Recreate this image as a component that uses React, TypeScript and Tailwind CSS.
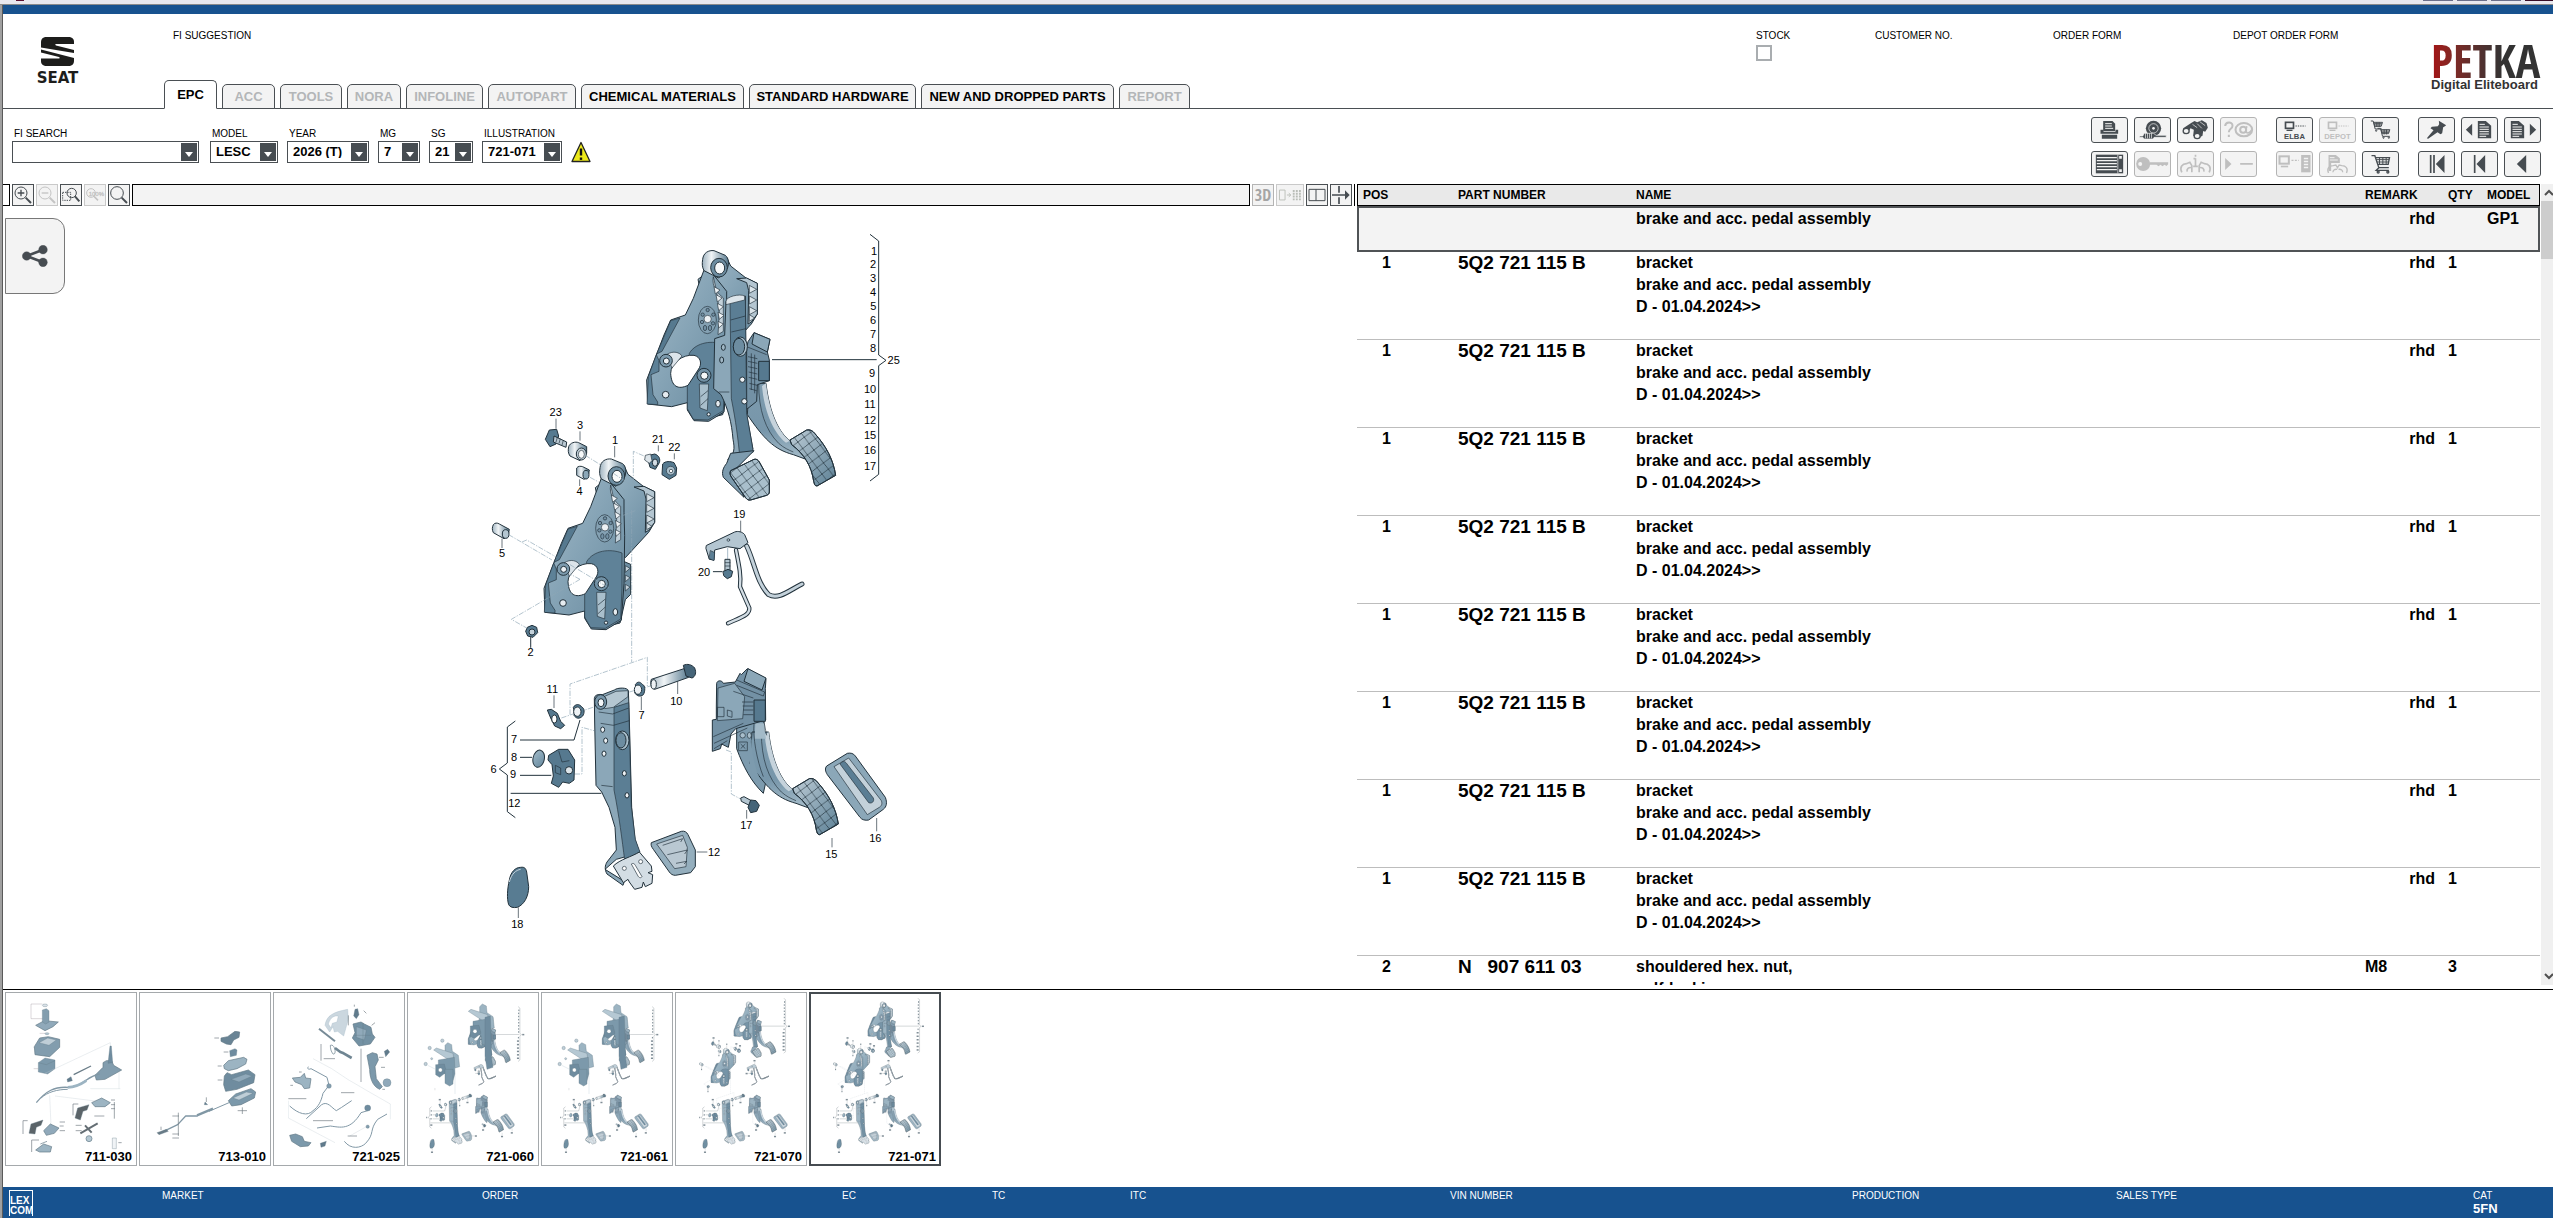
import type { ReactNode } from 'react'

const INK = '#22323c'

/* ---------- toolbar icons, drawn on a 110 x 78 grid ---------- */

const icons: Record<string, ReactNode> = {
  print: (
    <>
      <path d="M40 12h24l8 8v22H36V12z" />
      <path d="M42 20h20M42 27h20M42 34h24" stroke="#f3f3f3" strokeWidth="3" />
      <path d="M28 38h9v6h36v-6h8v12H28zM32 53h46v12H32z" />
    </>
  ),
  wheel: (
    <>
      <circle cx="58" cy="34" r="23" />
      <circle cx="58" cy="34" r="14" fill="none" stroke="#f3f3f3" strokeWidth="2" />
      <circle cx="58" cy="34" r="4" fill="#f3f3f3" />
      <path d="M16 57h10l4-8h28l8 6h30v6H60l-4 5H30l-4-5H16z" stroke="#f3f3f3" strokeWidth="2" />
      <path d="M34 49v15M40 49v15M46 49v15M52 49v15" stroke="#f3f3f3" strokeWidth="2" />
    </>
  ),
  binoculars: (
    <>
      <path d="M18 34l24-16 10-6 8 4 14-6 14 8 4 14-8 12-6-2-2 14-14 8-14-8 2-18-10-4-8 14-10 4z" />
      <ellipse cx="27" cy="42" rx="9" ry="8" fill="#f3f3f3" stroke="currentColor" strokeWidth="4" />
      <ellipse cx="60" cy="57" rx="9" ry="8" fill="#f3f3f3" stroke="currentColor" strokeWidth="4" />
      <path d="M60 20l14 14M68 14l16 12M46 22l14 10" stroke="#f3f3f3" strokeWidth="2" />
    </>
  ),
  help: (
    <g fill="none" stroke="currentColor" strokeWidth="6">
      <path d="M15 27c1-13 22-14 22-1 0 10-11 9-11 20M26 53v7" />
      <ellipse cx="71" cy="38" rx="25" ry="20" />
      <ellipse cx="69" cy="38" rx="9" ry="9" />
      <path d="M80 28c-4 12-3 20 3 20s10-5 12-10" strokeWidth="5" />
    </g>
  ),
  elba: (
    <>
      <rect x="28" y="16" width="24" height="18" fill="none" stroke="currentColor" strokeWidth="5" />
      <path d="M31 38h18v4H31z" />
      <path d="M58 27h30" stroke="currentColor" strokeWidth="3" strokeDasharray="4 3" />
      <text x="55" y="65" textAnchor="middle" fontSize="23" fontWeight="bold">ELBA</text>
    </>
  ),
  depot: (
    <>
      <rect x="28" y="16" width="24" height="18" fill="none" stroke="currentColor" strokeWidth="5" />
      <path d="M31 38h18v4H31z" />
      <path d="M58 27h30" stroke="currentColor" strokeWidth="3" strokeDasharray="4 3" />
      <text x="55" y="65" textAnchor="middle" fontSize="23" fontWeight="bold">DEPOT</text>
    </>
  ),
  carts: (
    <g fill="none" stroke="currentColor" strokeWidth="3">
      <path d="M26 12h7l6 24h20M35 16h26l-4 12H38z" />
      <path d="M37 20h22M37 24h21M44 16v14M51 16v14" />
      <path d="M46 34h9l6 24h22M57 38h26l-4 12H60z" />
      <path d="M59 42h22M59 46h21M66 38v14M73 38v14" />
      <circle cx="42" cy="41" r="2" />
      <circle cx="64" cy="62" r="2" />
      <circle cx="80" cy="62" r="2" />
    </g>
  ),
  cart: (
    <g fill="none" stroke="currentColor" strokeWidth="4">
      <path d="M28 14h10l12 36h30M40 20h42l-4 20H47" />
      <path d="M42 26h39M44 33h35M52 20v20M62 20v20M72 20v20" strokeWidth="3" />
      <path d="M50 50l-8 8h38" />
      <circle cx="48" cy="63" r="3" />
      <circle cx="77" cy="63" r="3" />
    </g>
  ),
  pin: <path d="M62 11l22 14-6 4-3 2-3 18-5 3-9-6-28 19-4-1 20-24-9-6 4-5 18-1 4-6z" />,
  docPrev: (
    <>
      <path d="M14 38l19-18v36zM50 12h24l16 14v38H50z" />
      <path d="M55 22h16M55 30h28M55 37h28M55 44h28M55 51h28M55 58h20" stroke="#f3f3f3" strokeWidth="3" />
    </>
  ),
  docNext: (
    <>
      <path d="M96 38L77 20v36zM20 12h24l16 14v38H20z" />
      <path d="M25 22h16M25 30h28M25 37h28M25 44h28M25 51h28M25 58h20" stroke="#f3f3f3" strokeWidth="3" />
    </>
  ),
  list: (
    <>
      <path d="M14 11h82v56H14z" />
      <path d="M17 20h60M17 29h60M17 38h60M17 47h60M17 56h60" stroke="#f3f3f3" strokeWidth="4" />
      <path d="M84 15h8v8h-8zM84 55h8v8h-8z" fill="#f3f3f3" />
      <path d="M80 11v56" stroke="#f3f3f3" strokeWidth="2" />
    </>
  ),
  key: (
    <>
      <circle cx="27" cy="39" r="21" />
      <circle cx="18" cy="39" r="6" fill="#f3f3f3" />
      <path d="M46 34h56v6l-5 5-6-4-6 5-6-5-6 5-6-5H46z" />
    </>
  ),
  info: (
    <g fill="none" stroke="currentColor" strokeWidth="5">
      <path d="M14 64c-8-16 2-26 14-26l10-4 6 10v20M96 64c8-16-2-26-14-26l-10-4-6 10v20" />
      <path d="M30 62c-2-8 4-14 14-12M80 62c2-8-4-14-14-12" />
      <path d="M55 22v24M55 11v6M48 46h14M49 23h6" />
    </g>
  ),
  arrowDash: <path d="M15 21l19 18-19 18zM60 36h38v5H60z" />,
  pcRack: (
    <>
      <rect x="10" y="16" width="28" height="22" fill="none" stroke="currentColor" strokeWidth="6" />
      <path d="M14 44h22v5H14z" />
      <path d="M46 28h22" stroke="currentColor" strokeWidth="4" strokeDasharray="6 4" />
      <path d="M75 12h28v52H75z" />
      <path d="M83 20h13v5H83zM83 29h13v5H83zM83 38h13v5H83zM83 47h13v5H83z" fill="#f3f3f3" />
    </>
  ),
  docHands: (
    <>
      <path d="M28 12h22l12 10v14H28zM28 36h8v24h-8z" />
      <path d="M32 20h14M32 27h24" stroke="#f3f3f3" strokeWidth="3" />
      <path d="M28 66c-6-14 2-22 14-22l8-2 5 8 5-8 8 2c12 0 20 8 14 22M42 64c-2-6 4-10 12-9M70 64c2-6-4-10-12-9" fill="none" stroke="currentColor" strokeWidth="4" />
    </>
  ),
  first: <path d="M35 12h5v54h-5zM45 12h5v54h-5zM53 39l26-27v54z" />,
  prev: <path d="M38 12h5v54h-5zM46 39l26-27v54z" />,
  back: <path d="M38 39l28-27v54z" />,
}

type ToolDef = { icon: string; label: string; off?: boolean }

const toolGroups: ToolDef[][][] = [
  [
    [
      { icon: 'print', label: 'Print' },
      { icon: 'wheel', label: 'Wheels and tyres' },
      { icon: 'binoculars', label: 'Search' },
      { icon: 'help', label: 'Contact', off: true },
    ],
    [
      { icon: 'list', label: 'Parts list' },
      { icon: 'key', label: 'Key', off: true },
      { icon: 'info', label: 'Information', off: true },
      { icon: 'arrowDash', label: 'Supersession', off: true },
    ],
  ],
  [
    [
      { icon: 'elba', label: 'ELBA' },
      { icon: 'depot', label: 'DEPOT', off: true },
      { icon: 'carts', label: 'All carts' },
    ],
    [
      { icon: 'pcRack', label: 'Transfer', off: true },
      { icon: 'docHands', label: 'Notes', off: true },
      { icon: 'cart', label: 'Cart' },
    ],
  ],
  [
    [
      { icon: 'pin', label: 'Pin' },
      { icon: 'docPrev', label: 'Previous page' },
      { icon: 'docNext', label: 'Next page' },
    ],
    [
      { icon: 'first', label: 'First' },
      { icon: 'prev', label: 'Previous' },
      { icon: 'back', label: 'Back' },
    ],
  ],
]

function ToolButton({ icon, label, off }: ToolDef) {
  return (
    <button
      aria-label={label}
      disabled={off}
      className={
        off
          ? 'h-[26px] w-[37px] rounded-[3px] border border-[#b4b4b4] bg-[#f3f3f3] text-[#bfbfbf]'
          : 'h-[26px] w-[37px] rounded-[3px] border border-[#4a4f53] bg-[#f3f3f3] text-[#464c51]'
      }
    >
      <svg viewBox="3 3 104 72" className="h-full w-full" fill="currentColor">
        {icons[icon]}
      </svg>
    </button>
  )
}

/* ---------- exploded view of the pedal assembly, 3 units per pixel ---------- */

function Defs() {
  return (
    <defs>
      <linearGradient id="plate" x1="0" y1="0" x2="1" y2="1">
        <stop offset="0" stopColor="#a3bac8" />
        <stop offset="0.45" stopColor="#86a4b6" />
        <stop offset="1" stopColor="#66889d" />
      </linearGradient>
      <linearGradient id="arm" x1="0" y1="0" x2="0" y2="1">
        <stop offset="0" stopColor="#7d9bae" />
        <stop offset="0.6" stopColor="#7796aa" />
        <stop offset="1" stopColor="#a9bfcc" />
      </linearGradient>
      <linearGradient id="tube" x1="0" y1="0" x2="1" y2="0">
        <stop offset="0" stopColor="#9fb3c0" />
        <stop offset="0.35" stopColor="#f0f4f6" />
        <stop offset="1" stopColor="#587a8f" />
      </linearGradient>
      <linearGradient id="pad" x1="0" y1="0" x2="1" y2="1">
        <stop offset="0" stopColor="#bccbd5" />
        <stop offset="1" stopColor="#5d8196" />
      </linearGradient>
      <pattern id="grid" width="34" height="34" patternUnits="userSpaceOnUse" patternTransform="rotate(8)">
        <path d="M0 0l34 34M34 0L0 34" stroke={INK} strokeWidth="2" fill="none" />
      </pattern>
    </defs>
  )
}

function Bracket() {
  return (
    <g strokeLinejoin="round">
      <path d="M740 112l12 26 46 36 34 16v92l-18 30-70 76-60-60-30-150z" fill="url(#plate)" />
      <path d="M770 176l30-2 32 16v92l-18 24-10 6 2-100-6-24z" fill="#b4c6d1" />
      <path d="M808 196l22 12-22 12zM808 228l22 12-22 12zM808 260l22 12-22 12zM808 284l16 10-16 10z" fill="#dbe4e9" strokeWidth="2" />
      <path d="M736 398l24 10v90l-16 16-16 70-40 10-10-180z" fill="#6d8da1" />
      <path d="M744 412l14 8-14 12zM744 440l14 8-14 12zM744 468l14 8-14 12z" fill="#c3d1da" strokeWidth="2" />
      <path d="M672 150l-32 85-24 50-44 15-20 45-52 135 3 72 72 8 47-12v22l20 32 44 2 46-28 8-110 2-144-2-70V214l-40-50z" fill="url(#plate)" />
      <path d="M572 302l28-8-54 100-16 8z" fill="#56798f" strokeWidth="2" />
      <path d="M505 470l24-66 8 18 0 32-24 10 6 60 14 22 0 8-32-2z" fill="#5d8197" strokeWidth="2" />
      <path d="M628 400c20-34 70-40 106-26v106l-4 92-46 28-44-2-18-32V500z" fill="#5f8298" strokeWidth="2" />
      <path d="M700 170c-6 30 14 50 30 64v100l-16 10 4-70-8-60z" fill="#c3d1da" strokeWidth="2" />
      <path d="M702 200l18 10-14 12zM708 224l18 10-14 12zM712 250l18 10-14 12zM714 276l18 10-14 12zM714 304l16 8-14 12z" fill="#eef2f5" strokeWidth="2" />
      <path d="M572 460c0-30 36-58 70-54 20 4 26 26 12 44l-30 46c-30 14-50 4-52-36z" fill="#fff" />
      <path d="M560 404c20-14 40-6 46 4l-30 36z" fill="#dce4ea" strokeWidth="2" />
      <circle cx="558" cy="422" r="19" fill="#7d9bae" />
      <circle cx="559" cy="423" r="9" fill="#eef2f5" />
      <circle cx="672" cy="466" r="21" fill="#7291a5" />
      <circle cx="673" cy="467" r="11" fill="#f5f8f9" />
      <path d="M658 492h28l-4 80-22-8zM662 530l22-18M662 556l22-20" fill="#a9bfcc" strokeWidth="2" />
      <circle cx="557" cy="524" r="10" fill="#e6ecf0" />
      <ellipse cx="714" cy="551" rx="7" ry="10" fill="#e6ecf0" />
      <circle cx="686" cy="583" r="5" fill="#e6ecf0" />
      <ellipse cx="682" cy="300" rx="27" ry="41" fill="#84a1b3" strokeWidth="2" />
      <circle cx="683" cy="297" r="11" fill="#eef2f5" strokeWidth="2" />
      <g fill="#7391a5" strokeWidth="2">
        <circle cx="683" cy="270" r="5" />
        <circle cx="668" cy="284" r="5" />
        <circle cx="666" cy="306" r="5" />
        <circle cx="700" cy="284" r="5" />
        <circle cx="699" cy="310" r="5" />
        <ellipse cx="675" cy="324" rx="5" ry="8" />
        <ellipse cx="690" cy="324" rx="5" ry="8" />
      </g>
      <path d="M668 118c2-20 18-28 34-26l34 14c10 8 12 24 6 40l-26 28-44-22c-6-12-6-20-4-34z" fill="url(#tube)" />
      <ellipse cx="717" cy="143" rx="25" ry="28" fill="#6d8da1" />
      <ellipse cx="719" cy="144" rx="15" ry="18" fill="#f7f9fa" />
    </g>
  )
}

function GasPedal() {
  return (
    <g strokeLinejoin="round">
      <path d="M808 490h50c10 90 40 150 72 172l50 4 20 60-60-22c-60-16-90-50-138-120z" fill="url(#arm)" />
      <path d="M858 490c10 90 40 150 72 172l-12 6c-40-30-66-100-72-170z" fill="#c6d3dc" stroke="none" />
      <path d="M836 490c0 80 20 140 60 180 16 14 30 20 44 26" fill="none" strokeWidth="2" />
      <path d="M930 660l50-30c10-2 18 2 24 10 36 40 56 80 63 126l-56 32c-8 0-8-8-10-14-6-44-28-82-66-110z" fill="url(#pad)" />
      <path d="M930 660l50-30c10-2 18 2 24 10 36 40 56 80 63 126l-56 32c-8 0-8-8-10-14-6-44-28-82-66-110z" fill="url(#grid)" />
    </g>
  )
}

function UpperAssembly() {
  return (
    <g stroke={INK} strokeWidth="3" strokeLinejoin="round">
      <GasPedal />
      <path d="M800 385l4-20 18-27 48 20-8 38 6 24v62l-36 12-2 50-30 24z" fill="#7391a5" />
      <path d="M822 338l48 20-8 38-46-24z" fill="#8ba7b8" />
      <path d="M836 424h32v58h-32z" fill="#56798f" />
      <path d="M804 410l28 6M804 424l28 6M804 440l28 6M806 456l26 6M806 472l26 6M808 490l24 6M808 506l22 6M814 400v110M824 404v116M800 380l60 24" fill="none" strokeWidth="2" />
      <Bracket />
      <path d="M704 356l30-10 4-102 58-16 3 350 20 110-76 30c20-16 22-30 16-60-4-50-14-90-36-134l-22-18z" fill="#8ba7b8" />
      <path d="M750 244l46-10 4 346 20 116-40 20c-6-60-12-110-26-180z" fill="#5b7e94" strokeWidth="2" />
      <path d="M738 244c0-14 40-24 56-16v12l-56 14z" fill="#dde5ea" strokeWidth="2" />
      <path d="M752 300l44-12M754 336l44-10M716 516h32" fill="none" strokeWidth="2" />
      <ellipse cx="781" cy="380" rx="21" ry="29" fill="#a9bfcc" />
      <ellipse cx="777" cy="380" rx="17" ry="25" fill="#6d8da1" />
      <ellipse cx="730" cy="382" rx="6" ry="9" fill="#9fb6c4" />
      <ellipse cx="725" cy="420" rx="6" ry="9" fill="#9fb6c4" />
      <circle cx="787" cy="479" r="8" fill="#eef2f5" />
      <circle cx="793" cy="544" r="8" fill="#eef2f5" />
      <path d="M752 700l70-8-60 60 30 80-62-60c-6-16 0-30 10-42z" fill="#7d9bae" />
      <path d="M752 752l70-34c8-2 12 2 16 8l30 54v36c0 6-4 8-8 10l-48 14c-10 2-12-4-16-8l-40-58c-6-8-8-16-4-22z" fill="#a9bfcc" />
      <path d="M752 752l70-34c8-2 12 2 16 8l30 54v36c0 6-4 8-8 10l-48 14c-10 2-12-4-16-8l-40-58c-6-8-8-16-4-22z" fill="url(#grid)" />
      <path d="M1170 43l26 20v342l22 16-22 16v326l-26 20M876 419h314" fill="none" />
    </g>
  )
}

function SmallParts() {
  return (
    <g stroke={INK} strokeWidth="3" strokeLinejoin="round">
      <path d="M208 630l22-2 6 20-8 24-18 8-14-22z" fill="#567a90" />
      <path d="M222 648l38 18-2 16-38-16z" fill="#b9c8d2" />
      <path d="M232 652l-4 14M241 656l-4 14M250 661l-4 14" strokeWidth="2" />
      <path d="M266 680c4-12 20-16 30-12l24 12v20l-20 22-30-14c-6-8-6-18-4-28z" fill="url(#tube)" />
      <ellipse cx="304" cy="702" rx="15" ry="18" fill="#c3d1da" />
      <ellipse cx="304" cy="703" rx="9" ry="12" fill="#f5f8f9" strokeWidth="2" />
      <path d="M290 744c4-6 12-6 18-4l20 10-4 20-12 8-22-12z" fill="url(#tube)" />
      <ellipse cx="318" cy="764" rx="9" ry="13" fill="#8ba7b8" />
      <path d="M40 914c4-6 12-6 18-2l30 16-4 20-12 8-32-18c-4-8-4-16 0-24z" fill="url(#tube)" />
      <ellipse cx="77" cy="942" rx="10" ry="13" fill="#b4c6d1" />
      <path d="M508 706l16-4c12 4 18 14 14 26l-12 20-16-6-4-16z" fill="#567a90" />
      <path d="M496 706l16-4 4 20-8 8-14-10z" fill="#dde5ea" strokeWidth="2" />
      <ellipse cx="525" cy="728" rx="8" ry="11" fill="#d3dde4" />
      <path d="M548 732c8-10 24-8 34-4l8 16-2 22-20 12-22-14z" fill="#567a90" />
      <circle cx="572" cy="752" r="13" fill="#a9bfcc" strokeWidth="2" />
      <circle cx="573" cy="753" r="5" fill="#fff" strokeWidth="2" />
      <path d="M142 1222l14-6 14 6 3 16-14 14-16-4-6-14z" fill="#567a90" />
      <circle cx="156" cy="1236" r="9" fill="#c3d1da" />
      <path d="M228 596v30M300 634v28M404 678v34M299 778v20M66 956v28M535 676v18M583 700v18M782 902v34M152 1252v32" strokeWidth="2" />
    </g>
  )
}

function Rod() {
  return (
    <g stroke={INK} strokeLinejoin="round" strokeLinecap="round" fill="none">
      <path d="M768 990c10 50 16 80 12 110l28 64c2 20-20 26-64 46" strokeWidth="13" />
      <path d="M768 990c10 50 16 80 12 110l28 64c2 20-20 26-64 46" stroke="#d3dde4" strokeWidth="7" />
      <path d="M800 978c24 50 30 110 66 146 30 16 60-12 100-32" strokeWidth="15" />
      <path d="M800 978c24 50 30 110 66 146 30 16 60-12 100-32" stroke="#c3d1da" strokeWidth="9" />
      <path d="M680 976l84-40c10-4 24 0 30 8l10 24-24 18-38-6-38 10-2 30-14-2-10-32z" fill="#b4c6d1" strokeWidth="3" />
      <path d="M692 992l12 6-2 24-14-6z" fill="#5b7e94" strokeWidth="2" />
      <circle cx="745" cy="960" r="4" strokeWidth="2" />
      <path d="M743 984v32" stroke="#7d9bae" strokeWidth="2" />
      <path d="M736 1018h14v34h-14z" fill="#b4c6d1" strokeWidth="3" />
      <path d="M736 1028h14M736 1038h14" strokeWidth="2" />
      <path d="M730 1054l14-6 14 6-4 16-12 6-10-8z" fill="#567a90" strokeWidth="3" />
      <path d="M700 1055h26" strokeWidth="3" />
    </g>
  )
}

function LeaderLines() {
  return (
    <g fill="none" stroke="#8ea6b5" strokeWidth="2" strokeDasharray="16 4 4 4">
      <path d="M316 706l48 30M330 772l26 14M400 760l60 40V694l32 14M86 944l130 76M126 966l14-6 90 52M270 1034l120 72M300 1078l-206 120 46 26M300 1078l-30-16M430 886l36-14M455 870v456" />
      <path d="M270 1484v-92l232-80v86M244 1494l130-44M448 1416l70-20M284 1662h22v-140l36 10M738 1590l16 6v126l26 14" />
    </g>
  )
}

function LowerParts() {
  return (
    <g stroke={INK} strokeWidth="3" strokeLinejoin="round" transform="translate(0 1200)">
      {/* brake pedal arm */}
      <path d="M343 236c0-12 14-14 24-12l36-14c10-8 40-8 42 2l2 50 8 300 10 96 14 40-70 20-34 30 58 36-4 12-48-34c-8-14-6-26 0-36l28-36-4-68-18-60-22-46-17-20-4-190z" fill="#8ba7b8" />
      <path d="M402 262l44-14 8 312 12 98 14 38-46 24c-8-60-16-130-32-210z" fill="#5b7e94" strokeWidth="2" />
      <path d="M372 230l36-16 36-2v18l-44 32-26 4z" fill="#b4c6d1" strokeWidth="2" />
      <ellipse cx="362" cy="246" rx="18" ry="22" fill="#7896a9" />
      <ellipse cx="363" cy="248" rx="9" ry="12" fill="#f3f6f8" />
      <path d="M356 276l42 6 48-18M362 310l38 6 48-14M364 496l34 4" fill="none" strokeWidth="2" />
      <ellipse cx="427" cy="361" rx="20" ry="28" fill="#a9bfcc" />
      <ellipse cx="423" cy="361" rx="15" ry="23" fill="#6d8da1" />
      <ellipse cx="368" cy="329" rx="6" ry="8" fill="#eef2f5" />
      <ellipse cx="377" cy="362" rx="6" ry="8" fill="#eef2f5" />
      <ellipse cx="372" cy="401" rx="6" ry="8" fill="#eef2f5" />
      <ellipse cx="433" cy="460" rx="6" ry="8" fill="#eef2f5" />
      <ellipse cx="441" cy="526" rx="6" ry="8" fill="#eef2f5" />
      <path d="M400 738c20-20 56-28 78-42l36 42 2 16-12 4 14 6-2 26-20 10-6-14-4 16-22 6-16-22-4-8-14 10z" fill="#d3dde4" />
      <circle cx="433" cy="745" r="6" fill="#fff" strokeWidth="2" />
      <circle cx="482" cy="725" r="6" fill="#fff" strokeWidth="2" />
      <path d="M454 732c6-4 10 0 12 4l20 34c-4 6-10 2-12-2z" fill="#fff" strokeWidth="2" />
      {/* brake pad */}
      <path d="M514 668l90-34c10-2 16 2 20 10l22 46v50l-14 18-46 8c-8 0-14-4-18-10l-48-68c-6-8-8-14-6-20z" fill="#94aebd" />
      <path d="M530 672l78-26 14 36-4 58-34 6z" fill="#b9c8d2" strokeWidth="2" />
      <path d="M548 676l60-20-6 10M562 704l60-14-8 12M588 730l32-6-8 8" fill="none" strokeWidth="2" />
      {/* spacer, bolt and bearings */}
      <path d="M514 178l98-32 14 26-102 36c-10-4-14-18-10-30z" fill="url(#tube)" />
      <path d="M610 136c12-6 26-2 34 8 6 14 2 26-8 30l-18-6z" fill="#456478" />
      <ellipse cx="521" cy="193" rx="8" ry="14" fill="#eef2f5" />
      <path d="M466 194c6-10 14-10 22 0 8 2 8 20 2 30-10 8-20 4-26-6 4-8 4-14 2-24z" fill="#567a90" />
      <ellipse cx="474" cy="209" rx="11" ry="14" fill="#eef2f5" />
      <path d="M280 262c6-10 18-12 26 0 8 2 8 18 2 26-10 10-20 8-26-2 2-8 0-14-2-24z" fill="#567a90" />
      <ellipse cx="292" cy="275" rx="11" ry="14" fill="#eef2f5" />
      <path d="M202 270l12-2 18 12 10 24 12 12-12 10-18-8-12-24z" fill="#56798f" />
      <ellipse cx="223" cy="297" rx="8" ry="12" fill="#fff" />
      {/* switch carrier */}
      <ellipse cx="176" cy="416" rx="17" ry="26" fill="url(#plate)" transform="rotate(12 176 416)" />
      <path d="M206 406l30-18h28l20 32-2 60-14 10-20-4-12 16-22-12 6-22-4-34-12-14z" fill="#56798f" />
      <path d="M226 436l16 8v20l-16-6zM236 392l10 34 22-4" fill="none" strokeWidth="2" />
      <circle cx="267" cy="451" r="11" fill="#dde5ea" />
      <path d="M106 303l-24 18v108l-24 18 24 18v110l24 18" fill="none" />
      <path d="M120 360h162l18-60M120 412h36M120 466h94M92 520h272" fill="none" />
      {/* rubber stop */}
      <path d="M88 780c4-24 18-38 34-38 12-2 16 4 18 14l6 44c0 30-14 54-34 62-12 2-22 0-26-8-6-20-4-46 2-74z" fill="#587c92" />
      <path d="M88 786c6-24 20-36 34-38" fill="none" stroke="#c3d1da" />
      {/* throttle pedal module */}
      <path d="M770 320l50-20h32c-2 40 6 80 20 120l-22 100c-36-34-60-80-80-134z" fill="#7d9bae" />
      <g transform="translate(8 -154)">
        <GasPedal />
      </g>
      <path d="M826 310h27c0 20 3 30 5 46h-34z" fill="#a3bac8" stroke="none" />
      <path d="M816 350c-4 30 4 90 30 140l-30-30-14-60z" fill="#7d9bae" stroke="none" />
      <path d="M822 310c-4 40 8 110 28 160M852 306l8 40" fill="none" strokeWidth="2" />
      <path d="M710 190c2-10 16-10 20 0l36-4 14-26 4 4 18-18 56 30-2 30 1 94-90 26-14 16-8 40-20-10-4 14-24 8V300l12-2v-40z" fill="#7391a5" />
      <path d="M804 146l54 28-12 36-54-26z" fill="#8ba7b8" />
      <path d="M714 204l50-14 30 40-6 66-76 6z" fill="#8ba7b8" strokeWidth="2" />
      <path d="M822 240h34v64h-34z" fill="#56798f" />
      <path d="M770 180l84 36-4 12-80-32M760 214l60 20M786 246h34M788 258h32M790 270h30M790 284h30M700 350l90-40M702 370l100-46M702 386l40-24M712 262h20v28h-20zM742 270l14 4v18l-14-4zM776 366h26v26h-26zM782 372l14 14M796 372l-14 14" fill="none" strokeWidth="2" />
      <circle cx="788" cy="346" r="8" fill="#a9bfcc" strokeWidth="2" />
      <ellipse cx="808" cy="346" rx="6" ry="9" fill="#a9bfcc" strokeWidth="2" />
      <path d="M782 534l10-4 22 12-2 16-28-14z" fill="#b4c6d1" />
      <path d="M812 540l16 2 10 14-8 18-18 4-8-16z" fill="#456478" />
      <path d="M1040 438l62-38c10-2 18 0 24 8l90 124c6 16 4 28-6 36l-44 32c-10 2-20 0-26-8l-98-128c-6-10-8-18-2-26z" fill="#8ba7b8" />
      <path d="M1062 440l44-26 98 128c4 10 0 16-6 20l-36 22z" fill="#c3d1da" strokeWidth="2" />
      <path d="M1080 432c6-8 12-10 18-4l82 106c4 10-4 18-14 14z" fill="#5b7e94" strokeWidth="2" />
      <path d="M152 50v32M222 226v38M484 230v40M593 184v38M800 570v26M1056 654v28M1190 594v40M115 862v32M650 696h32" strokeWidth="2" />
    </g>
  )
}

const callouts: [string, number, number][] = [
  ['1', 1182, 93], ['2', 1179, 134], ['3', 1179, 176], ['4', 1179, 218], ['5', 1180, 260], ['6', 1179, 301],
  ['7', 1179, 344], ['8', 1179, 384], ['9', 1176, 461], ['10', 1170, 507], ['11', 1170, 554], ['12', 1170, 601],
  ['15', 1170, 646], ['16', 1170, 692], ['17', 1170, 738], ['25', 1241, 420],
  ['23', 227, 577], ['3', 300, 616], ['1', 405, 662], ['21', 534, 657], ['22', 583, 683], ['4', 299, 813],
  ['5', 66, 1000], ['19', 778, 883], ['20', 672, 1056], ['2', 152, 1297],
  ['11', 217, 1407], ['7', 102, 1558], ['8', 102, 1612], ['6', 41, 1647], ['9', 99, 1664], ['12', 103, 1749],
  ['7', 485, 1486], ['10', 589, 1445], ['12', 702, 1896], ['17', 799, 1815], ['15', 1054, 1903],
  ['16', 1186, 1854], ['18', 112, 2114],
]

function Callouts() {
  return (
    <g fontSize="33" textAnchor="middle" fill="#000">
      {callouts.map(([n, x, y], i) => (
        <text key={i} x={x} y={y + 11}>{n}</text>
      ))}
    </g>
  )
}

function CalloutMarks({ from, to }: { from: number; to: number }) {
  return (
    <g fill="#6a7a84">
      {callouts.slice(from, to).map(([n, x, y], i) => (
        <rect key={i} x={x - n.length * 7} y={y - 9} width={n.length * 14} height="20" />
      ))}
    </g>
  )
}

function PedalDrawing() {
  return (
    <svg viewBox="-87 0 1368 2190" className="h-[730px] w-[456px]" role="img" aria-label="Pedal assembly 721-071">
      <UpperAssembly />
      <g transform="translate(-308 625)" stroke={INK} strokeWidth="3">
        <Bracket />
      </g>
      <SmallParts />
      <Rod />
      <LeaderLines />
      <LowerParts />
      <Callouts />
    </svg>
  )
}

/* ---------- thumbnails on a 396 x 522 grid ---------- */

function ThumbPedals() {
  return (
    <g transform="translate(65 9) scale(.223)">
      <UpperAssembly />
      <g transform="translate(-308 625)" stroke={INK} strokeWidth="3">
        <Bracket />
      </g>
      <SmallParts />
      <Rod />
      <LeaderLines />
      <LowerParts />
      <CalloutMarks from={0} to={39} />
    </g>
  )
}

function HandleBracket() {
  return (
    <g stroke="#45606f" strokeWidth="1" strokeLinejoin="round">
      <path d="M34 14l8-8 12 6 2 20 18 12 4 34-14 4-12-20-8-20-10-10z" fill="#8ba7b8" />
      <path d="M0 28l8-6 50 16 2 14-14 6z" fill="#a9bfcc" />
      <path d="M14 58l48-8 2 50-8 26-14 2-4-28-24-6z" fill="#66889d" />
      <path d="M6 72l26-2 6 24-20 16-12-8z" fill="#56798f" />
      <circle cx="20" cy="88" r="6" fill="#fff" />
    </g>
  )
}

function ThumbHandle() {
  return (
    <>
      <g transform="translate(72 34) scale(.223)">
        <UpperAssembly />
        <CalloutMarks from={0} to={16} />
      </g>
      <g transform="translate(184 30)">
        <HandleBracket />
        <path d="M50 46l16-4 4 130 4 24-18 6-6-40z" fill="#56798f" stroke="#45606f" />
      </g>
      <g transform="translate(80 146)">
        <HandleBracket />
        <path d="M34 86h24v44l-10 6-14-8z" fill="#66889d" stroke="#45606f" />
      </g>
      <g fill="#b4c6d1" stroke="#45606f">
        <circle cx="68" cy="168" r="5" />
        <circle cx="106" cy="146" r="5" />
        <circle cx="56" cy="216" r="5" />
        <circle cx="74" cy="200" r="3" />
      </g>
      <path d="M62 220l24 12M144 250v56" stroke="#a9bfcc" fill="none" />
      <g transform="translate(50 9) scale(.223)">
        <Rod />
        <LowerParts />
        <CalloutMarks from={26} to={39} />
      </g>
    </>
  )
}

function ThumbGearLever() {
  return (
    <g stroke="#45606f" strokeWidth="1" strokeLinejoin="round">
      <path d="M78 36h34M78 36v44h38M104 124h18M86 166h14M86 230h14" stroke="#7d7078" fill="none" />
      <ellipse cx="120" cy="40" rx="8" ry="4" fill="#d3dde4" />
      <path d="M92 100l26-14 42 4-16 14-24 12z" fill="#7d9bae" strokeWidth="2" />
      <path d="M112 54l12-4 8 6v34l-10 6-10-6z" fill="#6d8da1" />
      <ellipse cx="126" cy="125" rx="6" ry="3" fill="#a9bfcc" />
      <path d="M88 164l16-26 26-4 34 8v24l-30 28-44-6z" fill="#6d8da1" strokeWidth="2" />
      <path d="M102 152l26-14 26 6-22 16z" fill="#b4c6d1" />
      <path d="M100 212l20-14 30 6v26l-22 16-28-6z" fill="#66889d" />
      <path d="M100 212l24 6 26-12" fill="none" />
      <path d="M120 244l196-92v30M134 310l4 90M150 312l160 20M342 240v50M256 290h90" stroke="#b7c3cb" fill="none" />
      <path d="M270 250l24-24v-14l10-6h16l6 14 24 14-50 28-26 2z" fill="#6d8da1" strokeWidth="2" />
      <path d="M315 162h4l4 50-14 2z" fill="#56798f" />
      <path d="M206 248l52-26" stroke="#4f6572" strokeWidth="4" />
      <path d="M284 246c-40 6-50 40-96 40-40-2-64 10-94 46" fill="none" stroke="#6b8595" strokeWidth="4" />
      <path d="M244 266c-20 14-34 20-56 20" fill="none" stroke="#8ba7b8" strokeWidth="8" />
      <path d="M108 318c20-18 50-26 80-26" fill="none" stroke="#6b8595" strokeWidth="3" />
      <path d="M186 262l12-8 4 12-14 4z" fill="#456478" />
      <path d="M260 332l30-14 26 14-16 12h-30z" fill="#8ba7b8" strokeWidth="2" />
      <path d="M210 378l8-30 34-10-6 16-12 4-8 26z" fill="#3f4a50" />
      <path d="M226 424l52-30M240 400l20 22" stroke="#4a555c" strokeWidth="6" />
      <circle cx="252" cy="440" r="9" fill="#a9bfcc" strokeWidth="2" />
      <path d="M72 424l6-28 36-12-6 16-14 6-4 20z" fill="#3f4a50" />
      <path d="M116 416l20-20 26 12-14 16-24 6z" fill="#7d9bae" strokeWidth="2" />
      <path d="M92 474l24-18 24 8-4 16h-32zM106 456l20-8" fill="#8ba7b8" strokeWidth="2" />
      <path d="M322 438h12v32h-12z" fill="#eef2f5" />
      <path d="M54 386v40M54 386h14M80 444v36M80 444h22M204 336v34M204 336h16M328 330v50M212 400h18M212 416h18M164 390h16M164 402h12M164 416h16M318 324h12M318 338h12M318 350h12M268 372h30M340 452h10" stroke="#56626a" strokeWidth="2" fill="none" />
    </g>
  )
}

function ThumbSelector() {
  return (
    <g stroke="#45606f" strokeWidth="1" strokeLinejoin="round">
      <path d="M246 138l20-4 22-16 14 2-2 16-16 8-8 14-14-2-16-8z" fill="#4f6f83" strokeWidth="2" />
      <path d="M272 176l16-6 6 4-2 16-18 4z" fill="#56798f" />
      <path d="M254 220l14-14 46-10 10 6-4 14-26 14-26 6-12-6z" fill="#8ba7b8" strokeWidth="2" />
      <path d="M256 252l8-10 14 6 50-14 20 14-4 24-50 20-34 6-6-20z" fill="#56798f" strokeWidth="2" />
      <path d="M276 262l44-16 20 6-40 18z" fill="#7d9bae" />
      <path d="M268 326l22-20 46-16 14 10-4 18-40 20-28 4z" fill="#66889d" strokeWidth="2" />
      <path d="M282 318l40-18 20 4-42 20z" fill="#b4c6d1" />
      <path d="M270 332l-60 26" stroke="#6b8595" strokeWidth="3" />
      <path d="M222 350l-48 20" stroke="#6b8595" strokeWidth="7" />
      <path d="M176 372h-36l-24 26-50 24" fill="none" stroke="#6b8595" strokeWidth="4" />
      <path d="M54 422l28-10 6 6-28 10z" fill="#4f6572" />
      <path d="M198 330l8 8h-10z" fill="#456478" />
      <path d="M226 138h14M254 180h14M236 222h12M236 264h14M100 372h20M118 362v70M100 426h20M100 438h20M202 316v14M296 356h28M310 346v20M66 404v10" stroke="#56626a" strokeWidth="2" fill="none" />
    </g>
  )
}

function ThumbClutch() {
  return (
    <g stroke="#45606f" strokeWidth="1" strokeLinejoin="round">
      <path d="M156 100c4-30 26-40 68-48l2 30-14 50-18-14-10 2-4-16-10 16z" fill="#c3d1da" stroke="#8ba7b8" />
      <path d="M166 96c6-20 18-26 30-24l-4 18-14 4-4 14z" fill="#fff" stroke="#8ba7b8" />
      <path d="M246 52l8-2 4 18-8 12-8-8z" fill="#456478" />
      <path d="M240 96l24-6 10 6 20 10 4 20 8 10-14 20-34 6-20-24 8-16z" fill="#5b7e94" strokeWidth="2" />
      <path d="M250 104l30 10-6 30-24-8zM244 130h50M270 92v64" fill="#7d9bae" />
      <path d="M138 110l48 38" stroke="#5f7684" strokeWidth="6" />
      <path d="M172 160c14-6 20 30 8 26-6-8-8-16-8-26z" fill="#fff" strokeWidth="2" />
      <path d="M186 168l16 12 10 4 24 14" fill="none" stroke="#56707f" strokeWidth="8" />
      <path d="M282 190l16-8 14 4 4 18-10 20 4 36 18 24-8 8c-24-10-30-40-30-60z" fill="#66889d" strokeWidth="2" />
      <circle cx="342" cy="272" r="12" fill="#7d9bae" />
      <path d="M334 178l10-6 6 8-12 14z" fill="#456478" />
      <path d="M58 258l24-2 12-12 4 14 16 2-4 28-16 2-8-12-20-8z" fill="#8ba7b8" strokeWidth="2" />
      <path d="M120 200l56 30 48 32 58 34 70 40v46M46 326v52l140 74M230 432l50-28" stroke="#b7c3cb" fill="none" />
      <path d="M106 224c-4 6 0 10 8 6l48 26 6 24-18 24c-6 26-14 40-30 52-16 18-44 10-70-14" fill="none" stroke="#6b8595" strokeWidth="3" />
      <path d="M100 380l46-42c18-12 30 10 44 18l16-10 30-20M132 408l40-6c30 4 60 14 92-40l20-6M214 448c20 26 50 20 64 6 28-30 10-40 36-72l28-16" fill="none" stroke="#6b8595" strokeWidth="3" />
      <circle cx="168" cy="282" r="7" fill="#6d8da1" />
      <circle cx="284" cy="348" r="9" fill="#56798f" />
      <circle cx="284" cy="404" r="5" fill="#6d8da1" />
      <path d="M50 430l18-4 20 8 6 14 20 4-8 10-24 2-26-16z" fill="#66889d" strokeWidth="2" />
      <path d="M142 454l18-6-4 14-12 4z" fill="#456478" />
      <path d="M144 156v50M152 200h34M46 320h54M120 386h60M204 302h40M224 432h28M264 170v100M244 38v6M272 56l8 8M306 92l-10 8M226 70v30M60 280h-8M78 240h8M318 196h14M324 226h12M328 292h8" stroke="#56626a" strokeWidth="2" fill="none" />
    </g>
  )
}

const thumbs = [
  { id: '711-030', art: <ThumbGearLever /> },
  { id: '713-010', art: <ThumbSelector /> },
  { id: '721-025', art: <ThumbClutch /> },
  { id: '721-060', art: <ThumbHandle /> },
  { id: '721-061', art: <ThumbHandle /> },
  { id: '721-070', art: <ThumbPedals /> },
  { id: '721-071', art: <ThumbPedals />, active: true },
]

/* ---------- header ---------- */

const tabs = [
  { label: 'EPC', width: 'w-[53px]', state: 'active' },
  { label: 'ACC', width: 'w-[53px]', state: 'off' },
  { label: 'TOOLS', width: 'w-[62px]', state: 'off' },
  { label: 'NORA', width: 'w-[54px]', state: 'off' },
  { label: 'INFOLINE', width: 'w-[77px]', state: 'off' },
  { label: 'AUTOPART', width: 'w-[88px]', state: 'off' },
  { label: 'CHEMICAL MATERIALS', width: 'w-[163px]', state: 'on' },
  { label: 'STANDARD HARDWARE', width: 'w-[167px]', state: 'on' },
  { label: 'NEW AND DROPPED PARTS', width: 'w-[193px]', state: 'on' },
  { label: 'REPORT', width: 'w-[71px]', state: 'off' },
]

const tabStyle: Record<string, string> = {
  active: 'h-[29px] border-b-white bg-white text-black',
  on: 'h-[25px] bg-[#f3f3f3] text-black',
  off: 'h-[25px] bg-[#f3f3f3] text-[#b3b6b8]',
}

function SeatLogo() {
  return (
    <div className="flex w-[109px] flex-col items-center pt-[23px]">
      <svg viewBox="0 0 66 58" className="h-[29px] w-[33px]" fill="#1d1d1b">
        <path d="M0 21V11C0 3 4 0 12 0h42c8 0 12 3 12 10v4H30c-2 0-2 2 0 3l36 9v6z" />
        <path d="M0 25l66 17v5c0 8-4 11-12 11H12C4 58 0 55 0 48v-5h36c2 0 2-2 0-3L0 31z" />
      </svg>
      <span className="mt-1 font-['DejaVu_Sans'] text-[15px] leading-[16px] font-bold text-[#1d1d1b]">SEAT</span>
    </div>
  )
}

function PetkaLogo() {
  return (
    <div className="w-[110px] pt-7">
      <div className="bg-linear-to-r from-[#a50f14] via-[#52302f] via-45% to-[#333] to-65% bg-clip-text font-['Open_Sans_Condensed','Roboto_Condensed','Liberation_Sans_Narrow','Liberation_Sans',sans-serif] text-[46px] leading-[37px] font-bold text-transparent">
        PETKA
      </div>
      <div className="text-[13px] leading-[12px] font-bold whitespace-nowrap text-[#333]">Digital Eliteboard</div>
    </div>
  )
}

function Header() {
  return (
    <header className="flex h-[95px] border-b border-[#4a4f53]">
      <SeatLogo />
      <div className="ml-[52px] flex flex-col justify-between">
        <span className="pt-4 pl-[9px] text-[10px] leading-3">FI SUGGESTION</span>
        <nav className="-mb-px flex items-end gap-[5px]">
          {tabs.map((t) => (
            <button
              key={t.label}
              disabled={t.state === 'off'}
              className={`rounded-t-[5px] border border-[#4a4f53] text-[13px] font-bold whitespace-nowrap ${t.width} ${tabStyle[t.state]}`}
            >
              {t.label}
            </button>
          ))}
        </nav>
      </div>
      <div className="ml-auto flex pt-4 pr-3 text-[10px] leading-3">
        <div className="flex w-[119px] flex-col gap-[3px]">
          <label htmlFor="stock">STOCK</label>
          <input id="stock" type="checkbox" className="h-4 w-4 appearance-none border-2 border-[#a9adb0] bg-white" />
        </div>
        <span className="w-[178px]">CUSTOMER NO.</span>
        <span className="w-[180px]">ORDER FORM</span>
        <span className="w-[198px]">DEPOT ORDER FORM</span>
        <div className="-mt-4">
          <PetkaLogo />
        </div>
      </div>
    </header>
  )
}

/* ---------- search row ---------- */

function ArrowBlock() {
  return (
    <span className="pointer-events-none flex w-4 shrink-0 items-center justify-center bg-[#464c51]">
      <svg viewBox="0 0 8 5" className="mt-1 h-[5px] w-2" fill="#fff">
        <path d="M0 0h8L4 5z" />
      </svg>
    </span>
  )
}

const filters = [
  { id: 'model', label: 'MODEL', value: 'LESC', width: 'w-[68px]' },
  { id: 'year', label: 'YEAR', value: '2026 (T)', width: 'w-[82px]' },
  { id: 'mg', label: 'MG', value: '7', width: 'w-[42px]' },
  { id: 'sg', label: 'SG', value: '21', width: 'w-[44px]' },
  { id: 'illustration', label: 'ILLUSTRATION', value: '721-071', width: 'w-[80px]' },
]

function SearchRow() {
  return (
    <div className="flex h-[75px] justify-between pr-3 pl-[9px]">
      <div className="flex gap-[9px] pt-[19px] text-[10px] leading-3">
        <div className="mr-0.5 w-[187px]">
          <label htmlFor="fi" className="block h-[13px] pl-0.5">FI SEARCH</label>
          <div className="flex h-[22px] border border-[#4a4f53] p-px">
            <input id="fi" className="min-w-0 flex-1 px-1 text-[13px] font-bold outline-none" />
            <ArrowBlock />
          </div>
        </div>
        {filters.map((f) => (
          <div key={f.id} className={f.width}>
            <label htmlFor={f.id} className="block h-[13px] pl-0.5 whitespace-nowrap">{f.label}</label>
            <div className="flex h-[22px] border border-[#4a4f53] p-px">
              <select id={f.id} className="min-w-0 flex-1 appearance-none pl-1 text-[13px] font-bold outline-none">
                <option>{f.value}</option>
              </select>
              <ArrowBlock />
            </div>
          </div>
        ))}
        <svg viewBox="0 0 20 21" className="mt-[13px] h-[22px] w-5">
          <path d="M10 1l9 19H1z" fill="#ece81a" stroke="#222" strokeWidth="1.3" strokeLinejoin="round" />
          <path d="M10 7v7" stroke="#111" strokeWidth="2.4" />
          <path d="M10 16v2.4" stroke="#111" strokeWidth="2.4" />
        </svg>
      </div>
      <div className="flex gap-[19px] pt-2">
        {toolGroups.map((rows, g) => (
          <div key={g} className="flex flex-col gap-2">
            {rows.map((row, r) => (
              <div key={r} className="flex gap-1.5">
                {row.map((b) => (
                  <ToolButton key={b.icon} {...b} />
                ))}
              </div>
            ))}
          </div>
        ))}
      </div>
    </div>
  )
}

/* ---------- illustration ---------- */

function Glass({ children, off, label }: { children?: ReactNode; off?: boolean; label: string }) {
  return (
    <button
      aria-label={label}
      disabled={off}
      className={off ? 'h-[22px] w-[22px] border border-[#c9c9c9] bg-[#f3f3f3] text-[#c4c4c4]' : 'h-[22px] w-[22px] border border-[#4a4f53] bg-[#f3f3f3] text-[#464c51]'}
    >
      <svg viewBox="0 0 60 60" className="h-full w-full" fill="none" stroke="currentColor" strokeWidth="3">
        {children}
      </svg>
    </button>
  )
}

function ViewerToolbar() {
  return (
    <div className="flex h-[22px] gap-0.5">
      <div className="w-[7px] border border-l-0 border-black" />
      <Glass label="Zoom in">
        <circle cx="24" cy="24" r="18" />
        <path d="M24 14v20M14 24h20" strokeWidth="4" />
        <path d="M38 38l16 16" strokeWidth="6" />
      </Glass>
      <Glass label="Zoom out" off>
        <circle cx="24" cy="24" r="18" />
        <path d="M14 24h20" strokeWidth="4" />
        <path d="M38 38l16 16" strokeWidth="6" />
      </Glass>
      <Glass label="Zoom area">
        <path d="M5 22h24v24H5z" strokeDasharray="4 3" />
        <circle cx="32" cy="24" r="14" />
        <path d="M42 34l13 15" strokeWidth="6" />
      </Glass>
      <Glass label="Original size" off>
        <circle cx="18" cy="24" r="13" />
        <path d="M27 34l12 12" strokeWidth="5" />
        <text x="34" y="32" textAnchor="middle" fontSize="18" strokeWidth="1" fill="currentColor">100%</text>
      </Glass>
      <Glass label="Fit">
        <circle cx="24" cy="24" r="19" />
        <path d="M38 38l16 16" strokeWidth="6" />
      </Glass>
      <div className="flex-1 border border-black bg-[#f3f3f3]" />
      <button disabled className="w-[22px] border border-[#b4b4b4] bg-[#f3f3f3] font-['Open_Sans_Condensed','Liberation_Sans_Narrow','Liberation_Sans',sans-serif] text-[16px] leading-[18px] font-bold text-[#a5a5a5]">
        3D
      </button>
      <button aria-label="Move to list" disabled className="w-7 border border-[#c9c9c9] bg-[#f3f3f3] text-[#b9bdb7]">
        <svg viewBox="0 0 84 60" className="h-full w-full" fill="none" stroke="currentColor" strokeWidth="3">
          <path d="M8 14h18v32H8z" />
          <path d="M32 30h10M38 24l7 6-7 6" />
          <path d="M54 14v34M64 14v34M74 14v34" strokeWidth="6" strokeDasharray="6 3" />
        </svg>
      </button>
      <button aria-label="Split view" className="w-[22px] border border-[#4a4f53] bg-[#f3f3f3]">
        <svg viewBox="0 0 60 60" className="h-full w-full" fill="none" stroke="#464c51" strokeWidth="3">
          <path d="M6 13h48v34H6zM27 13v34" />
        </svg>
      </button>
      <button aria-label="Move splitter" className="w-[22px] border border-[#4a4f53] bg-[#f3f3f3]">
        <svg viewBox="0 0 60 60" className="h-full w-full" fill="none" stroke="#464c51" strokeWidth="5">
          <path d="M24 3v20M24 37v20M3 30h44" />
          <path d="M42 16l14 14-14 14z" fill="#464c51" stroke="none" />
        </svg>
      </button>
      <div className="w-px bg-black" />
    </div>
  )
}

function Viewer() {
  return (
    <section className="flex min-h-0 flex-col">
      <ViewerToolbar />
      <div className="relative flex min-h-0 flex-1 justify-center pt-[14px]">
        <button
          aria-label="Share"
          className="absolute top-3 left-0.5 flex h-[76px] w-[60px] items-center justify-center rounded-r-xl border border-[#777] bg-[#f3f3f3]"
        >
          <svg viewBox="0 0 78 66" className="h-[22px] w-[26px]" fill="#464c51" stroke="#464c51">
            <circle cx="14" cy="33" r="13" />
            <circle cx="63" cy="14" r="13" />
            <circle cx="63" cy="52" r="13" />
            <path d="M63 14L14 33l49 19" fill="none" strokeWidth="8" />
          </svg>
        </button>
        <PedalDrawing />
      </div>
    </section>
  )
}

/* ---------- parts list ---------- */

const brackets = Array.from({ length: 8 }, () => ({
  pos: '1',
  part: '5Q2 721 115 B',
  name: ['bracket', 'brake and acc. pedal assembly', 'D - 01.04.2024>>'],
  remark: 'rhd',
  qty: '1',
}))

const parts = [
  ...brackets,
  { pos: '2', part: 'N   907 611 03', name: ['shouldered hex. nut,', 'self-locking'], remark: 'M8', qty: '3' },
]

function PartsList() {
  return (
    <section className="flex min-h-0 pb-1">
      <div className="min-w-0 flex-1 overflow-hidden">
        <table className="w-full table-fixed border-separate border-spacing-0 text-left text-[16px] leading-[22px] font-bold">
          <colgroup>
            <col className="w-[101px]" />
            <col className="w-[178px]" />
            <col />
            <col className="w-[83px]" />
            <col className="w-[39px]" />
            <col className="w-[53px]" />
          </colgroup>
          <thead>
            <tr className="h-[22px] bg-[#e9e9e9] text-[12px] outline-1 -outline-offset-1 outline-black">
              <th className="pl-1.5">POS</th>
              <th>PART NUMBER</th>
              <th>NAME</th>
              <th>REMARK</th>
              <th>QTY</th>
              <th>MODEL</th>
            </tr>
          </thead>
          <tbody className="align-top">
            <tr className="h-[46px] bg-[#f3f3f3] outline-2 -outline-offset-2 outline-[#505356]">
              <td />
              <td />
              <td className="pt-0.5">brake and acc. pedal assembly</td>
              <td className="pt-0.5 pr-[13px] text-right">rhd</td>
              <td />
              <td className="pt-0.5">GP1</td>
            </tr>
            {parts.map((p, i) => (
              <tr key={i} className="h-[88px]">
                <td className="border-b border-[#bdbdbd] pl-[25px]">{p.pos}</td>
                <td className="border-b border-[#bdbdbd] text-[19px] whitespace-pre">{p.part}</td>
                <td className="border-b border-[#bdbdbd]">
                  {p.name.map((line) => (
                    <div key={line}>{line}</div>
                  ))}
                </td>
                <td className={`border-b border-[#bdbdbd] ${p.remark === 'rhd' ? 'pr-[13px] text-right' : ''}`}>{p.remark}</td>
                <td className="border-b border-[#bdbdbd]">{p.qty}</td>
                <td className="border-b border-[#bdbdbd]" />
              </tr>
            ))}
          </tbody>
        </table>
      </div>
      <div className="ml-px flex w-3 flex-col overflow-hidden bg-[#f0f0f0] text-[#505050]">
        <svg viewBox="0 0 12 17" className="h-[17px] w-3" fill="none" stroke="currentColor" strokeWidth="2">
          <path d="M4 11l4-4 4 4" />
        </svg>
        <div className="h-[58px] bg-[#cdcdcd]" />
        <svg viewBox="0 0 12 17" className="mt-auto h-[17px] w-3" fill="none" stroke="currentColor" strokeWidth="2">
          <path d="M4 6l4 4 4-4" />
        </svg>
      </div>
    </section>
  )
}

/* ---------- bottom ---------- */

function ThumbStrip() {
  return (
    <div className="flex h-[198px] gap-0.5 border-t border-black pt-0.5 pl-0.5">
      {thumbs.map((t) => (
        <button
          key={t.id}
          className={
            t.active
              ? 'relative h-[174px] w-[132px] bg-white outline-2 -outline-offset-2 outline-[#464c51]'
              : 'relative h-[174px] w-[132px] bg-white outline-1 -outline-offset-1 outline-[#a5a9ac]'
          }
        >
          <svg viewBox="0 0 396 522" className="h-[174px] w-[132px] opacity-85">{t.art}</svg>
          <span className="absolute right-[5px] bottom-0.5 text-[13px] leading-[14px] font-bold">{t.id}</span>
        </button>
      ))}
    </div>
  )
}

function Footer() {
  return (
    <footer className="grid h-[31px] grid-cols-[159fr_320fr_360fr_150fr_138fr_320fr_402fr_264fr_357fr_80fr] bg-[#17528f] pt-[3px] text-[10px] leading-3 text-white">
      <div className="ml-1.5 h-[26px] w-6 overflow-hidden border border-b-0 border-white pt-[5px] text-[10px] leading-[10px] font-bold">
        LEX
        <br />
        COM
      </div>
      <span>MARKET</span>
      <span>ORDER</span>
      <span>EC</span>
      <span>TC</span>
      <span>ITC</span>
      <span>VIN NUMBER</span>
      <span>PRODUCTION</span>
      <span>SALES TYPE</span>
      <div>
        <div>CAT</div>
        <div className="text-[13px] leading-[14px] font-bold">5FN</div>
      </div>
    </footer>
  )
}

export default function App() {
  return (
    <div className="flex h-screen flex-col overflow-hidden bg-white font-['Liberation_Sans',Arial,sans-serif] text-black">
      <svg width="0" height="0" className="absolute">
        <Defs />
      </svg>
      <div className="flex h-[5px] justify-end gap-1 border-b border-[#8a8a8a] bg-[#e8e8ee]">
        <div className="mr-auto ml-4 h-px w-2 bg-[#5b1030]" />
        <div className="h-px w-[30px] bg-[#6b6f8a]" />
        <div className="h-px w-[30px] bg-[#6b6f8a]" />
        <div className="h-px w-[30px] bg-[#6b6f8a]" />
        <div className="h-px w-7 bg-[#3a0d25]" />
      </div>
      <div className="flex min-h-0 flex-1 border-l-2 border-[#a0a0a0]">
        <div className="flex min-h-0 min-w-0 flex-1 flex-col border-l border-[#5a5a5a]">
          <div className="h-[9px] shrink-0 bg-[#17528f]" />
          <Header />
          <SearchRow />
          <main className="grid min-h-0 flex-1 grid-cols-[1352fr_1196fr] grid-rows-[minmax(0,1fr)] gap-x-0.5">
            <Viewer />
            <PartsList />
          </main>
          <ThumbStrip />
          <Footer />
        </div>
      </div>
    </div>
  )
}
